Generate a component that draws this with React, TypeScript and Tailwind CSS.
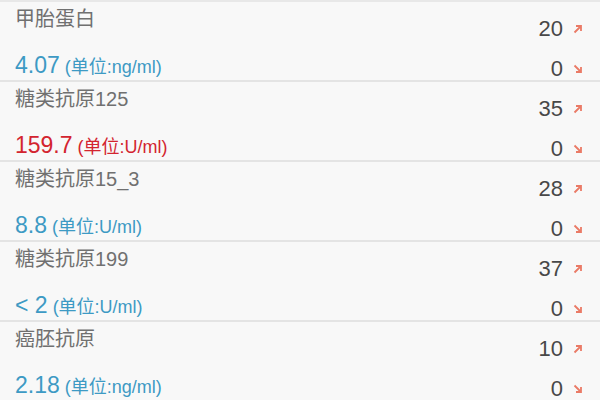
import React from 'react';

type Item = { name: string; value: string; unit: string; high: string; low: string; alert?: boolean };

const items: Item[] = [
  { name: '甲胎蛋白', value: '4.07', unit: '(单位:ng/ml)', high: '20', low: '0' },
  { name: '糖类抗原125', value: '159.7', unit: '(单位:U/ml)', high: '35', low: '0', alert: true },
  { name: '糖类抗原15_3', value: '8.8', unit: '(单位:U/ml)', high: '28', low: '0' },
  { name: '糖类抗原199', value: '< 2', unit: '(单位:U/ml)', high: '37', low: '0' },
  { name: '癌胚抗原', value: '2.18', unit: '(单位:ng/ml)', high: '10', low: '0' },
];

function Arrow({ up }: { up: boolean }) {
  return (
    <svg width="10" height="10" viewBox="0 0 10 10" className="text-[#ea7a66]">
      {up ? (
        <path d="M1.5 8.5 L8 2 M3 2 H8 V7" fill="none" stroke="currentColor" strokeWidth="1.8" />
      ) : (
        <path d="M1.5 1.5 L8 8 M3 8 H8 V3" fill="none" stroke="currentColor" strokeWidth="1.8" />
      )}
    </svg>
  );
}

function Row({ item }: { item: Item }) {
  const tone = item.alert ? 'text-[#d3242f]' : 'text-[#3d9ac4]';
  return (
    <div className="flex h-[80px] border-b-2 border-[#e4e4e4] px-[15px]">
      <div className="flex flex-1 flex-col">
        <div className="mt-[3px] text-[20px] leading-[28px] text-[#707070]">{item.name}</div>
        <div className="mt-auto mb-[-2px] flex items-baseline gap-[5px] leading-[30px]">
          <span className={`text-[23px] ${tone}`}>{item.value}</span>
          <span className={`text-[18px] ${tone}`}>{item.unit}</span>
        </div>
      </div>
      <div className="flex w-[80px] flex-col items-end pr-[2px] text-[22px] text-[#484848]">
        <div className="mt-[13px] flex items-center gap-[10px] leading-[28px]">
          <span>{item.high}</span>
          <Arrow up />
        </div>
        <div className="mt-[12px] flex items-center gap-[10px] leading-[28px]">
          <span>{item.low}</span>
          <Arrow up={false} />
        </div>
      </div>
    </div>
  );
}

export default function App() {
  return (
    <div
      className="h-[400px] w-[600px] overflow-hidden border-t-2 border-[#e8e8e8] bg-[#f8f8f8]"
      style={{ fontFamily: '"Liberation Sans", "Noto Sans CJK SC", sans-serif' }}
    >
      {items.map((it) => (
        <Row key={it.name} item={it} />
      ))}
    </div>
  );
}
